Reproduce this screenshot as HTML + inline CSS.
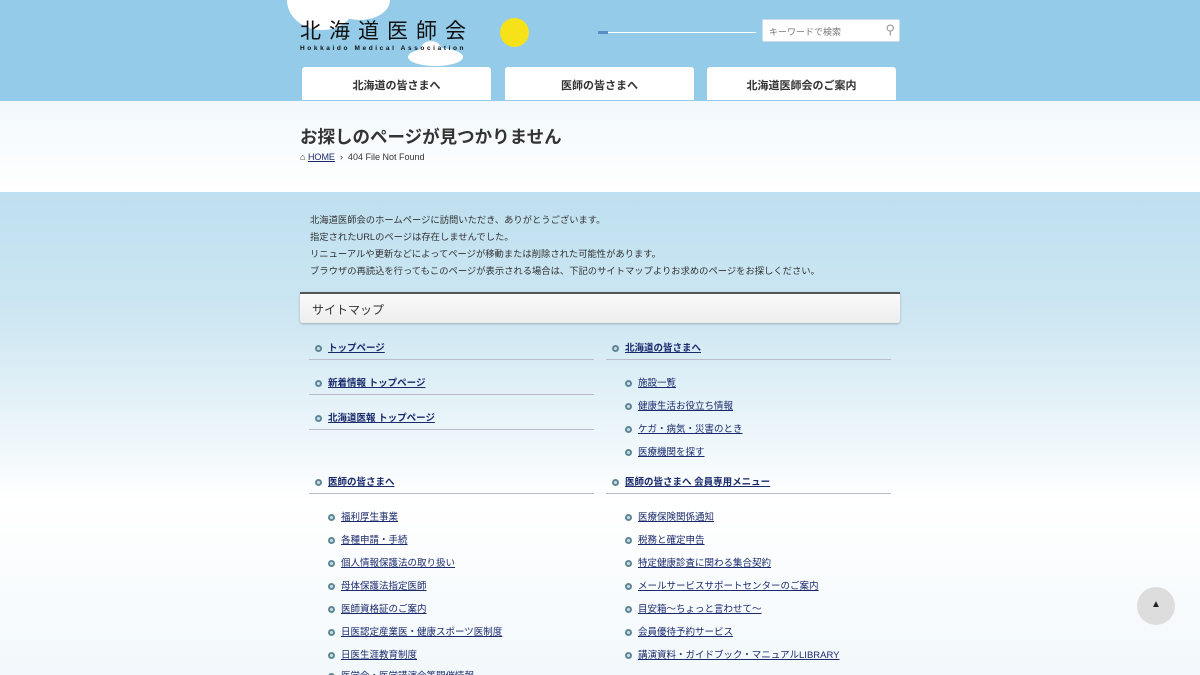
<!DOCTYPE html>
<html style="overflow:hidden;height:675px"><head><meta charset="utf-8"><style>
*{margin:0;padding:0;box-sizing:border-box}
body{width:1200px;height:675px;overflow:hidden;font-family:"Liberation Sans","Noto Sans CJK JP",sans-serif;color:#333;position:relative;background:#fff}
.g{position:absolute;left:0;width:1200px}
.hdr{position:absolute;top:0;left:0;width:1200px;height:101px;background:#93cbe9}
.cloud{position:absolute;background:#fff;border-radius:50%}
.logo{position:absolute;left:300px;top:15px;font-size:21px;letter-spacing:8px;color:#111}
.logo small{display:block;font-size:6.5px;letter-spacing:2.6px;font-weight:bold;margin-top:0}
.sun{position:absolute;left:500px;top:18px;width:29px;height:29px;border-radius:50%;background:#f7e21a}
.search{position:absolute;left:762px;top:19px;width:138px;height:23px;background:#fff;border:1px solid #cde;border-radius:2px;font-size:9px;color:#777;padding:5px 6px}
.nav{position:absolute;top:67px;height:33px;width:189px;background:#fff;border-radius:3px 3px 0 0;font-size:11px;font-weight:bold;color:#333;text-align:center;line-height:38px}
h1{position:absolute;left:300px;top:124px;font-size:17.5px;font-weight:bold;color:#333}
.bc{position:absolute;left:300px;top:152px;font-size:9px;color:#333}
.bc a{color:#1a2a6c;text-decoration:underline}
.intro{position:absolute;left:310px;top:212px;font-size:9.3px;line-height:17px;color:#333}
.sm{position:absolute;left:300px;top:292px;width:600px;height:31px;background:linear-gradient(#fafafa,#eee);border-top:2px solid #555;box-shadow:0 1px 2px rgba(0,0,0,.25);font-size:12px;padding:7px 12px;border-radius:0 0 3px 3px}
.l{position:absolute;font-size:9.5px;color:#1a2a6c;text-decoration:underline;white-space:nowrap}
.l:before{content:"";display:inline-block;width:7px;height:7px;border-radius:50%;background:#cfe0e6;border:2px solid #5d8797;margin-right:6px;vertical-align:-1px;box-sizing:border-box}
.b{font-weight:bold}
.ln{position:absolute;height:1px;background:#bbc;width:285px}
.top{position:absolute;left:1137px;top:587px;width:38px;height:38px;border-radius:50%;background:#ddd;text-align:center;line-height:36px;font-size:10px;color:#222}
</style></head><body>
<div class="g" style="top:101px;height:91px;background:linear-gradient(to bottom,#f1f8fc,#ffffff)"></div>
<div class="g" style="top:192px;height:120px;background:linear-gradient(to bottom,#bfe0f0,#cce6f2)"></div>
<div class="g" style="top:312px;height:190px;background:linear-gradient(to bottom,#cce6f2,#ffffff)"></div>
<div class="g" style="top:502px;height:173px;background:linear-gradient(to bottom,#ffffff,#f2f8fb)"></div>
<div class="hdr">
<div class="cloud" style="left:287px;top:-30px;width:70px;height:60px"></div>
<div class="cloud" style="left:330px;top:-20px;width:60px;height:40px"></div>
<div class="cloud" style="left:408px;top:48px;width:55px;height:18px"></div>
<div class="cloud" style="left:420px;top:41px;width:22px;height:20px"></div>
<div class="logo">北海道医師会<small>Hokkaido Medical Association</small></div>
<div class="sun"></div>
<div style="position:absolute;left:606px;top:32px;width:150px;height:1px;background:#fff"></div>
<div style="position:absolute;left:598px;top:31px;width:10px;height:3px;background:#5a8cc8"></div>
<div class="search">キーワードで検索<span style="position:absolute;right:4px;top:2px;font-size:13px;color:#999">⚲</span></div>
<div class="nav" style="left:302px">北海道の皆さまへ</div>
<div class="nav" style="left:505px">医師の皆さまへ</div>
<div class="nav" style="left:707px">北海道医師会のご案内</div>
</div>
<h1>お探しのページが見つかりません</h1>
<div class="bc">⌂ <a>HOME</a> &nbsp;›&nbsp; 404 File Not Found</div>
<div class="intro">北海道医師会のホームページに訪問いただき、ありがとうございます。<br>指定されたURLのページは存在しませんでした。<br>リニューアルや更新などによってページが移動または削除された可能性があります。<br>ブラウザの再読込を行ってもこのページが表示される場合は、下記のサイトマップよりお求めのページをお探しください。</div>
<div class="sm">サイトマップ</div>
<div class="l b" style="left:315px;top:340px">トップページ</div><div class="ln" style="left:309px;top:359px"></div>
<div class="l b" style="left:315px;top:375px">新着情報 トップページ</div><div class="ln" style="left:309px;top:394px"></div>
<div class="l b" style="left:315px;top:410px">北海道医報 トップページ</div><div class="ln" style="left:309px;top:429px"></div>
<div class="l b" style="left:612px;top:340px">北海道の皆さまへ</div><div class="ln" style="left:606px;top:359px"></div>
<div class="l" style="left:625px;top:375px">施設一覧</div>
<div class="l" style="left:625px;top:398px">健康生活お役立ち情報</div>
<div class="l" style="left:625px;top:421px">ケガ・病気・災害のとき</div>
<div class="l" style="left:625px;top:444px">医療機関を探す</div>
<div class="l b" style="left:315px;top:474px">医師の皆さまへ</div><div class="ln" style="left:309px;top:493px"></div>
<div class="l b" style="left:612px;top:474px">医師の皆さまへ 会員専用メニュー</div><div class="ln" style="left:606px;top:493px"></div>
<div class="l" style="left:328px;top:509px">福利厚生事業</div>
<div class="l" style="left:328px;top:532px">各種申請・手続</div>
<div class="l" style="left:328px;top:555px">個人情報保護法の取り扱い</div>
<div class="l" style="left:328px;top:578px">母体保護法指定医師</div>
<div class="l" style="left:328px;top:601px">医師資格証のご案内</div>
<div class="l" style="left:328px;top:624px">日医認定産業医・健康スポーツ医制度</div>
<div class="l" style="left:328px;top:647px">日医生涯教育制度</div>
<div class="l" style="left:328px;top:668px">医学会・医学講演会等開催情報</div>
<div class="l" style="left:625px;top:509px">医療保険関係通知</div>
<div class="l" style="left:625px;top:532px">税務と確定申告</div>
<div class="l" style="left:625px;top:555px">特定健康診査に関わる集合契約</div>
<div class="l" style="left:625px;top:578px">メールサービスサポートセンターのご案内</div>
<div class="l" style="left:625px;top:601px">目安箱〜ちょっと言わせて〜</div>
<div class="l" style="left:625px;top:624px">会員優待予約サービス</div>
<div class="l" style="left:625px;top:647px">講演資料・ガイドブック・マニュアルLIBRARY</div>
<div class="top">▲</div>
</body></html>
